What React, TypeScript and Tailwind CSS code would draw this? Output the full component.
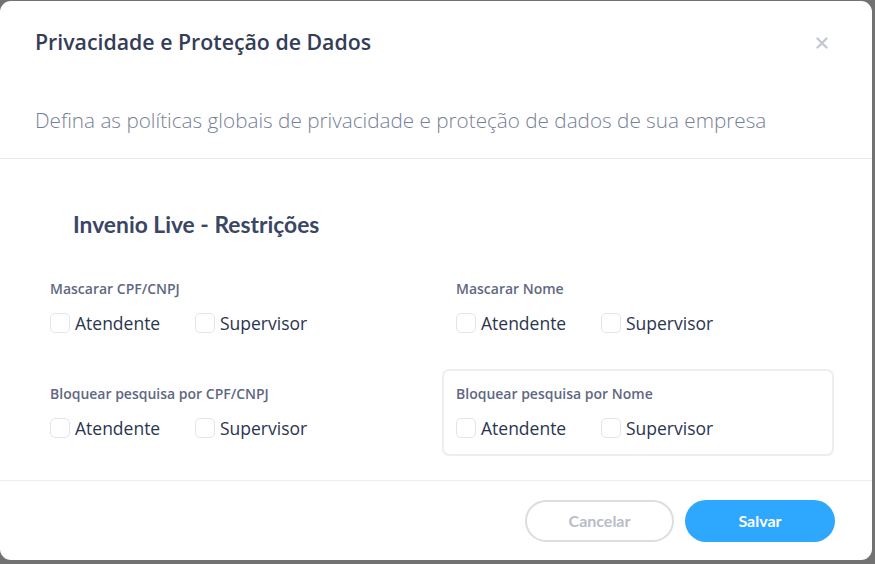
function Check({ label }: { label: string }) {
  return (
    <label className="flex items-center gap-[5px]">
      <span className="h-5 w-5 rounded-[5px] border border-[#e3e5ee] bg-white" />
      <span className="text-[17.5px] leading-5 text-[#2a3550]">{label}</span>
    </label>
  );
}

function Group({ title, boxed }: { title: string; boxed?: boolean }) {
  return (
    <div
      className={
        boxed
          ? "-mb-[17px] -ml-[14px] -mr-[12px] -mt-[15px] rounded-[7px] border-2 border-[#eceef1] pb-[16px] pl-[12px] pt-[13px]"
          : ""
      }
    >
      <div className="text-[14px] font-semibold leading-5 text-[#5f6882]">{title}</div>
      <div className="mt-[14px] flex gap-[25px]">
        <div className="w-[120px]">
          <Check label="Atendente" />
        </div>
        <Check label="Supervisor" />
      </div>
    </div>
  );
}

export default function App() {
  return (
    <div
      className="h-[564px] w-[875px] overflow-hidden bg-[#727272] pt-[1px]"
      style={{ fontFamily: '"Open Sans", sans-serif' }}
    >
      <div className="flex h-[559px] w-[872px] flex-col rounded-[11px] bg-white">
        <div className="flex items-center justify-between pl-[35px] pr-[44px] pt-[29px]">
          <h2 className="text-[21.3px] font-semibold leading-6 text-[#333d57]">
            Privacidade e Proteção de Dados
          </h2>
          <svg width="12" height="12" viewBox="0 0 12 12" className="mt-[1px]">
            <path d="M1.5 1.5 L10.5 10.5 M10.5 1.5 L1.5 10.5" stroke="#c5c8d2" strokeWidth="2.4" strokeLinecap="round" />
          </svg>
        </div>
        <p className="mt-[54px] pl-[35px] text-[20.7px] font-light leading-6 text-[#777f95]">
          Defina as políticas globais de privacidade e proteção de dados de sua empresa
        </p>
        <div className="mt-[26px] border-t border-[#e9eaec]" />
        <h3
          className="mt-[53px] pl-[73px] text-[22.8px] font-bold leading-6 text-[#3a4663]"
          style={{ fontFamily: "Lato, sans-serif" }}
        >
          Invenio Live - Restrições
        </h3>
        <div className="mt-[43px] grid grid-cols-[406px_366px] gap-y-[51px] pl-[50px]">
          <Group title="Mascarar CPF/CNPJ" />
          <Group title="Mascarar Nome" />
          <Group title="Bloquear pesquisa por CPF/CNPJ" />
          <Group title="Bloquear pesquisa por Nome" boxed />
        </div>
        <div className="mt-[41px] border-t border-[#eceef0]" />
        <div className="flex justify-end gap-[11px] pr-[37px] pt-[19px]">
          <button
            className="h-[42px] w-[149px] rounded-full border-2 border-[#dcdde2] text-[16px] font-bold text-[#b9bdc8]"
            style={{ fontFamily: "Lato, sans-serif" }}
          >
            Cancelar
          </button>
          <button
            className="h-[42px] w-[150px] rounded-full bg-[#2ea7ff] text-[16px] font-bold text-white"
            style={{ fontFamily: "Lato, sans-serif" }}
          >
            Salvar
          </button>
        </div>
      </div>
    </div>
  );
}
